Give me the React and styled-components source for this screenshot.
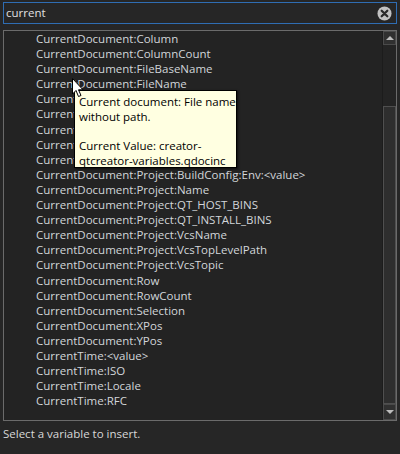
import React from 'react'
import styled, { createGlobalStyle } from 'styled-components'

const GlobalStyle = createGlobalStyle`
  html, body {
    margin: 0;
    padding: 0;
    background: #262626;
  }
  body {
    font-family: "Open Sans", "Noto Sans", sans-serif;
    font-size: 11.5px;
    color: #d4d4d4;
  }
`

const Page = styled.div`
  position: relative;
  width: 400px;
  height: 454px;
  padding-top: 2px;
  box-sizing: border-box;
  display: flex;
  flex-direction: column;
`

const SearchBox = styled.div`
  margin: 0 3px;
  height: 22px;
  box-sizing: border-box;
  border: 1px solid #2f6db3;
  background: #262626;
  display: flex;
  align-items: center;
  padding: 0 4px 0 2px;
`

const SearchInput = styled.div`
  flex: 1;
  color: #e0e0e0;
  line-height: 20px;
`

const ClearButton = styled.svg`
  width: 15px;
  height: 15px;
  display: block;
`

const ListFrame = styled.div`
  margin: 6px 3px 0;
  height: 391px;
  box-sizing: border-box;
  border: 1px solid #6b6b6b;
  background: #232323;
  display: flex;
`

const Rows = styled.div`
  flex: 1;
  overflow: hidden;
`

const Row = styled.div`
  height: 15.1px;
  line-height: 15px;
  padding-left: 32px;
  white-space: nowrap;
  color: #d2d6da;
`

const ScrollBar = styled.div`
  width: 13px;
  display: flex;
  flex-direction: column;
  background: #2a2a2a;
  border-left: 1px solid #1c1c1c;
`

const ArrowButton = styled.div`
  height: ${p => p.h}px;
  box-sizing: border-box;
  border: 1px solid #4a4a4a;
  background: #303030;
  display: flex;
  align-items: center;
  justify-content: center;
`

const Arrow = styled.div`
  width: 0;
  height: 0;
  border-left: 4px solid transparent;
  border-right: 4px solid transparent;
  ${p => p.up
    ? 'border-bottom: 4px solid #bdbdbd;'
    : 'border-top: 4px solid #bdbdbd;'}
`

const TrackSpace = styled.div`
  height: ${p => p.h}px;
  background: #242424;
`

const Handle = styled.div`
  flex: 1;
  box-sizing: border-box;
  border: 1px solid #4f4f4f;
  background: #2e2e2e;
`

const Status = styled.div`
  margin: 5px 3px 0;
  line-height: 15px;
  color: #d8d8d8;
`

const Tooltip = styled.div`
  position: absolute;
  left: 74px;
  top: 90px;
  width: 163px;
  height: 78px;
  box-sizing: border-box;
  border: 1px solid #000;
  background: #ffffe1;
  color: #000;
  padding: 3px 4px;
  line-height: 15px;
  white-space: nowrap;
  box-shadow: 1px 1px 2px rgba(0, 0, 0, 0.6);
`

const TipGap = styled.div`
  height: 14px;
`

const Cursor = styled.svg`
  position: absolute;
  left: 72px;
  top: 78px;
  width: 12px;
  height: 20px;
`

const items = [
  'CurrentDocument:Column',
  'CurrentDocument:ColumnCount',
  'CurrentDocument:FileBaseName',
  'CurrentDocument:FileName',
  'CurrentDocument:FilePath',
  'CurrentDocument:FontSize',
  'CurrentDocument:NativeFilePath',
  'CurrentDocument:NativePath',
  'CurrentDocument:Path',
  'CurrentDocument:Project:BuildConfig:Env:<value>',
  'CurrentDocument:Project:Name',
  'CurrentDocument:Project:QT_HOST_BINS',
  'CurrentDocument:Project:QT_INSTALL_BINS',
  'CurrentDocument:Project:VcsName',
  'CurrentDocument:Project:VcsTopLevelPath',
  'CurrentDocument:Project:VcsTopic',
  'CurrentDocument:Row',
  'CurrentDocument:RowCount',
  'CurrentDocument:Selection',
  'CurrentDocument:XPos',
  'CurrentDocument:YPos',
  'CurrentTime:<value>',
  'CurrentTime:ISO',
  'CurrentTime:Locale',
  'CurrentTime:RFC',
]

export default function App() {
  return (
    <Page>
      <GlobalStyle />
      <SearchBox>
        <SearchInput>current</SearchInput>
        <ClearButton viewBox="0 0 16 16">
          <circle cx="8" cy="8" r="7.5" fill="#c2c2c2" />
          <path d="M5 5 L11 11 M11 5 L5 11" stroke="#2a2a2a" strokeWidth="2.4" strokeLinecap="round" />
        </ClearButton>
      </SearchBox>
      <ListFrame>
        <Rows>
          {items.map(t => <Row key={t}>{t}</Row>)}
        </Rows>
        <ScrollBar>
          <ArrowButton h={14}><Arrow up /></ArrowButton>
          <TrackSpace h={61} />
          <Handle />
          <ArrowButton h={16}><Arrow /></ArrowButton>
        </ScrollBar>
      </ListFrame>
      <Status>Select a variable to insert.</Status>
      <Tooltip>
        <div>Current document: File name</div>
        <div>without path.</div>
        <TipGap />
        <div>Current Value: creator-</div>
        <div>qtcreator-variables.qdocinc</div>
      </Tooltip>
      <Cursor viewBox="0 0 12 20">
        <path d="M0.5 0.5 L0.5 16 L4 12.5 L6.5 18.5 L9 17.5 L6.5 11.8 L11 11.8 Z" fill="#fff" stroke="#000" strokeWidth="1" strokeLinejoin="round" />
      </Cursor>
    </Page>
  )
}
